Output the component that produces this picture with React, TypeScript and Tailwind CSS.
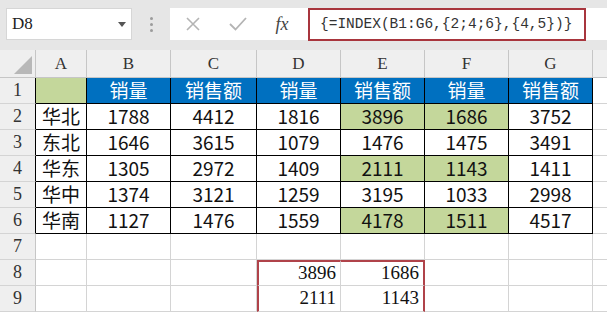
import React from "react";

const cols = ["A", "B", "C", "D", "E", "F", "G"];

const table = [
  ["", "销量", "销售额", "销量", "销售额", "销量", "销售额"],
  ["华北", "1788", "4412", "1816", "3896", "1686", "3752"],
  ["东北", "1646", "3615", "1079", "1476", "1475", "3491"],
  ["华东", "1305", "2972", "1409", "2111", "1143", "1411"],
  ["华中", "1374", "3121", "1259", "3195", "1033", "2998"],
  ["华南", "1127", "1476", "1559", "4178", "1511", "4517"],
];

const green = (r: number, c: number) =>
  (r === 0 && c === 0) || ((c === 4 || c === 5) && (r === 1 || r === 3 || r === 5));

const cellFont = { fontFamily: '"Noto Sans CJK SC", "Noto Sans", sans-serif' };
const serif = { fontFamily: '"Liberation Serif", "Noto Sans CJK SC", serif' };

const RowHead = ({ n, dark }: { n: number; dark?: boolean }) => (
  <div
    className={`flex h-[26px] items-center justify-center border-b border-r border-b-[#d4d4d4] bg-[#efefef] text-[18px] text-[#333] ${
      dark ? "border-r-black" : "border-r-[#c6c6c6]"
    }`}
    style={serif}
  >
    {n}
  </div>
);

const App = () => {
  return (
    <div className="h-[312px] w-[607px] overflow-hidden bg-white">
      {/* formula bar */}
      <div className="flex h-[50px] items-start bg-[#e6e6e6] pt-[8px]">
        <div className="ml-[6px] flex h-[32px] w-[126px] items-center justify-between border border-[#d6d6d6] bg-white pl-[5px] pr-[5px]">
          <span className="text-[17px] text-[#222]" style={serif}>
            D8
          </span>
          <svg width="8" height="5" viewBox="0 0 8 5">
            <path d="M0 0h8L4 5z" fill="#555" />
          </svg>
        </div>
        <div className="flex h-[32px] w-[38px] flex-col items-center justify-center gap-[3px]">
          <span className="h-[3px] w-[3px] rounded-full bg-[#9c9c9c]" />
          <span className="h-[3px] w-[3px] rounded-full bg-[#9c9c9c]" />
          <span className="h-[3px] w-[3px] rounded-full bg-[#9c9c9c]" />
        </div>
        <div className="flex h-[32px] flex-1 items-start bg-white">
          <div className="flex h-[32px] w-[46px] items-center justify-center">
            <svg width="14" height="14" viewBox="0 0 14 14">
              <path d="M1 1L13 13M13 1L1 13" stroke="#b4b4b4" strokeWidth="1.6" />
            </svg>
          </div>
          <div className="flex h-[32px] w-[44px] items-center justify-center">
            <svg width="18" height="14" viewBox="0 0 18 14">
              <path d="M1 7L6.5 12.5L17 1" stroke="#b4b4b4" strokeWidth="1.8" fill="none" />
            </svg>
          </div>
          <div className="flex h-[32px] w-[44px] items-center justify-center">
            <span className="text-[18px] italic text-[#444]" style={serif}>
              <i>f</i>x
            </span>
          </div>
          <div
            className="ml-[4px] flex h-[33px] w-[278px] items-center border-2 border-[#a8353d] pl-[10px] text-[14.5px] text-[#333]"
            style={{ fontFamily: '"Liberation Mono", monospace' }}
          >
            {"{=INDEX(B1:G6,{2;4;6},{4,5})}"}
          </div>
        </div>
      </div>

      {/* sheet */}
      <div className="grid grid-cols-[36px_51px_84px_86px_84px_84px_84px_84px_1fr]">
        <div className="flex h-[28px] items-end justify-end border-b border-r border-[#c6c6c6] bg-[#efefef] pb-[3px] pr-[3px]">
          <svg width="18" height="18" viewBox="0 0 18 18">
            <path d="M18 0V18H0z" fill="#b8b8b8" />
          </svg>
        </div>
        {cols.map((c) => (
          <div
            key={c}
            className="flex h-[28px] items-center justify-center border-b border-r border-[#c6c6c6] bg-[#efefef] text-[17px] text-[#333]"
            style={serif}
          >
            {c}
          </div>
        ))}
        <div className="h-[28px] border-b border-[#c6c6c6] bg-[#efefef]" />

        {table.map((row, r) => (
          <React.Fragment key={r}>
            <RowHead n={r + 1} dark />
            {row.map((v, c) => {
              const bg =
                r === 0 && c > 0 ? "bg-[#0070c0] text-white" : green(r, c) ? "bg-[#c4d79b] text-[#111]" : "bg-white text-[#111]";
              return (
                <div
                  key={c}
                  className={`flex h-[26px] items-center justify-center border-b border-r border-black text-[19px] ${bg}`}
                  style={cellFont}
                >
                  {v}
                </div>
              );
            })}
            <div className="h-[26px] border-b border-[#d4d4d4]" />
          </React.Fragment>
        ))}

        {[7, 8, 9].map((n) => (
          <React.Fragment key={n}>
            <RowHead n={n} />
            {cols.map((c) => {
              const val =
                n === 8 ? (c === "D" ? "3896" : c === "E" ? "1686" : "") : n === 9 ? (c === "D" ? "2111" : c === "E" ? "1143" : "") : "";
              let red = "";
              if (n >= 8 && c === "D") red = "border-l-2 border-l-[#b0434a]";
              if (n >= 8 && c === "E") red = "border-r-2 border-r-[#b0434a]";
              if (n === 8 && (c === "D" || c === "E")) red += " border-t-2 border-t-[#b0434a]";
              return (
                <div
                  key={c}
                  className={`flex h-[26px] items-center justify-end border-b border-r border-[#d4d4d4] pr-[4px] text-[19px] text-[#111] ${red}`}
                  style={serif}
                >
                  {val}
                </div>
              );
            })}
            <div className="h-[26px] border-b border-[#d4d4d4]" />
          </React.Fragment>
        ))}
      </div>
    </div>
  );
};

export default App;
